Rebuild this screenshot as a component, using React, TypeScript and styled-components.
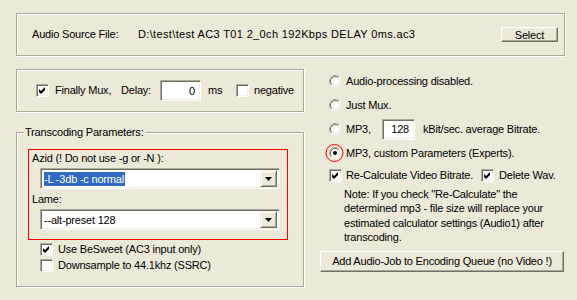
import styled, { createGlobalStyle } from "styled-components";

const GlobalStyle = createGlobalStyle`
  html, body {
    margin: 0;
    padding: 0;
    background: #ece9d8;
  }
  body {
    width: 577px;
    height: 300px;
    overflow: hidden;
    font-family: "Liberation Sans", Arial, sans-serif;
    font-size: 11px;
    letter-spacing: -0.2px;
    color: #000;
  }
`;

const Dialog = styled.div`
  padding: 13px 0 0 16px;
`;

const Etched = styled.div`
  box-sizing: border-box;
  border: 1px solid #aca899;
  box-shadow: inset 1px 1px 0 #fff, 1px 1px 0 #fff;
`;

const SourcePanel = styled(Etched)`
  width: 549px;
  height: 43px;
  display: flex;
  align-items: center;
  padding: 0 6px 0 15px;
`;

const Text = styled.span<{ $w?: number; $ml?: number }>`
  display: inline-block;
  white-space: nowrap;
  line-height: 13px;
  width: ${(p) => (p.$w ? `${p.$w}px` : "auto")};
  margin-left: ${(p) => p.$ml || 0}px;
`;

const PathText = styled(Text)`
  letter-spacing: 0.35px;
`;

const Button = styled.button<{ $w: number; $h: number }>`
  box-sizing: border-box;
  width: ${(p) => p.$w}px;
  height: ${(p) => p.$h}px;
  padding: 0;
  font: inherit;
  letter-spacing: inherit;
  color: #000;
  background: #ece9d8;
  border: 1px solid;
  border-color: #fff #716f64 #716f64 #fff;
  box-shadow: inset -1px -1px 0 #aca899;
`;

const SelectButton = styled(Button)`
  margin-left: auto;
`;

const Lower = styled.div`
  display: flex;
  margin-top: 13px;
`;

const LeftCol = styled.div`
  width: 289px;
  display: flex;
  flex-direction: column;
`;

const MuxPanel = styled(Etched)`
  width: 288px;
  height: 43px;
  display: flex;
  align-items: center;
  padding-left: 19px;
`;

const Sunken = styled.div`
  box-sizing: border-box;
  background: #fff;
  border: 1px solid;
  border-color: #aca899 #fff #fff #aca899;
  box-shadow: inset 1px 1px 0 #716f64, inset -1px -1px 0 #f1efe2;
`;

const NumberBox = styled(Sunken)<{ $w: number }>`
  width: ${(p) => p.$w}px;
  height: 21px;
  display: flex;
  align-items: center;
  justify-content: flex-end;
  padding-right: 5px;
`;

const CheckBox = styled(Sunken)`
  width: 13px;
  height: 13px;
  flex: none;
  display: flex;
  align-items: center;
  justify-content: center;
`;

const Group = styled.fieldset`
  box-sizing: border-box;
  width: 288px;
  min-width: 0;
  margin: 14px 0 0 0;
  padding: 0 0 13px 0;
  border: 1px solid #aca899;
  box-shadow: inset 1px 1px 0 #fff, 1px 1px 0 #fff;
`;

const Legend = styled.legend`
  margin-left: 7px;
  padding: 0 1px;
  line-height: 13px;
  background: #ece9d8;
`;

const RedBox = styled.div`
  box-sizing: border-box;
  width: 260px;
  margin: 10px 0 0 11px;
  padding: 2px 0 9px 3px;
  border: 1px solid #ff0000;
`;

const FieldLabel = styled.div<{ $mt?: number }>`
  line-height: 13px;
  margin-top: ${(p) => p.$mt || 0}px;
`;

const Combo = styled(Sunken)`
  width: 240px;
  height: 21px;
  margin: 3px 0 0 8px;
  display: flex;
  align-items: center;
  padding: 2px 2px 2px 3px;
`;

const ComboValue = styled.span<{ $selected?: boolean }>`
  flex: 1;
  line-height: 14px;
  white-space: nowrap;
  span {
    display: inline-block;
    padding-right: 1px;
    background: ${(p) => (p.$selected ? "#316ac5" : "transparent")};
    color: ${(p) => (p.$selected ? "#fff" : "#000")};
  }
`;

const DropButton = styled.div`
  box-sizing: border-box;
  width: 17px;
  height: 17px;
  display: flex;
  align-items: center;
  justify-content: center;
  background: #ece9d8;
  border: 1px solid;
  border-color: #f1efe2 #716f64 #716f64 #f1efe2;
  box-shadow: inset 1px 1px 0 #fff, inset -1px -1px 0 #aca899;
`;

const CheckRow = styled.div<{ $mt?: number }>`
  height: 16px;
  display: flex;
  align-items: center;
  margin: ${(p) => p.$mt || 0}px 0 0 23px;
`;

const RightCol = styled.div`
  flex: 1;
  padding-left: 15px;
`;

const OptionRow = styled.div<{ $h?: number }>`
  height: ${(p) => p.$h || 24}px;
  display: flex;
  align-items: center;
  padding-left: 9px;
`;

const Note = styled.div`
  margin: 1px 0 0 24px;
  line-height: 14.4px;
  white-space: nowrap;
`;

const AddButton = styled(Button)`
  display: block;
  margin-top: 6px;
`;

const Check = () => (
  <svg width="9" height="9" viewBox="0 0 9 9">
    <path d="M1 3 L3 5 L7 1 L7 4 L3 8 L1 6 Z" fill="#000" />
  </svg>
);

const CheckField = ({ on }: { on?: boolean }) => (
  <CheckBox>{on && <Check />}</CheckBox>
);

const Radio = ({ on, ring }: { on?: boolean; ring?: boolean }) => (
  <svg width="12" height="12" viewBox="0 0 12 12" style={{ overflow: "visible", flex: "none" }}>
    <circle cx="6" cy="6" r="4.5" fill="#fff" />
    <path d="M2.11 9.89 A5.5 5.5 0 0 1 9.89 2.11" fill="none" stroke="#aca899" />
    <path d="M9.89 2.11 A5.5 5.5 0 0 1 2.11 9.89" fill="none" stroke="#fff" />
    <path d="M2.82 9.18 A4.5 4.5 0 0 1 9.18 2.82" fill="none" stroke="#716f64" />
    <path d="M9.18 2.82 A4.5 4.5 0 0 1 2.82 9.18" fill="none" stroke="#f1efe2" />
    {on && <circle cx="6" cy="6" r="2" fill="#000" />}
    {ring && <circle cx="5.5" cy="6" r="8.5" fill="none" stroke="#ff0000" />}
  </svg>
);

const Arrow = () => (
  <svg width="7" height="4" viewBox="0 0 7 4">
    <path d="M0 0 H7 L3.5 4 Z" fill="#000" />
  </svg>
);

export default function App() {
  return (
    <>
      <GlobalStyle />
      <Dialog>
        <SourcePanel>
          <Text $w={106}>Audio Source File:</Text>
          <PathText>D:\test\test AC3 T01 2_0ch 192Kbps DELAY 0ms.ac3</PathText>
          <SelectButton $w={57} $h={15}>Select</SelectButton>
        </SourcePanel>

        <Lower>
          <LeftCol>
            <MuxPanel>
              <CheckField on />
              <Text $w={66} $ml={6}>Finally Mux,</Text>
              <Text $w={39}>Delay:</Text>
              <NumberBox $w={41}>0</NumberBox>
              <Text $w={28} $ml={7}>ms</Text>
              <CheckField />
              <Text $ml={5}>negative</Text>
            </MuxPanel>

            <Group>
              <Legend>Transcoding Parameters:</Legend>
              <RedBox>
                <FieldLabel>Azid (! Do not use -g or -N ):</FieldLabel>
                <Combo>
                  <ComboValue $selected>
                    <span>-L -3db -c normal</span>
                  </ComboValue>
                  <DropButton>
                    <Arrow />
                  </DropButton>
                </Combo>
                <FieldLabel $mt={4}>Lame:</FieldLabel>
                <Combo>
                  <ComboValue>
                    <span>--alt-preset 128</span>
                  </ComboValue>
                  <DropButton>
                    <Arrow />
                  </DropButton>
                </Combo>
              </RedBox>
              <CheckRow $mt={1}>
                <CheckField on />
                <Text $ml={5}>Use BeSweet (AC3 input only)</Text>
              </CheckRow>
              <CheckRow>
                <CheckField />
                <Text $ml={5}>Downsample to 44.1khz (SSRC)</Text>
              </CheckRow>
            </Group>
          </LeftCol>

          <RightCol>
            <OptionRow>
              <Radio />
              <Text $ml={5}>Audio-processing disabled.</Text>
            </OptionRow>
            <OptionRow>
              <Radio />
              <Text $ml={5}>Just Mux.</Text>
            </OptionRow>
            <OptionRow>
              <Radio />
              <Text $w={36} $ml={5}>MP3,</Text>
              <NumberBox $w={33}>128</NumberBox>
              <Text $ml={8}>kBit/sec. average Bitrate.</Text>
            </OptionRow>
            <OptionRow>
              <Radio on ring />
              <Text $ml={5}>MP3, custom Parameters (Experts).</Text>
            </OptionRow>
            <OptionRow $h={21}>
              <CheckField on />
              <Text $w={135} $ml={4}>Re-Calculate Video Bitrate.</Text>
              <CheckField on />
              <Text $ml={5}>Delete Wav.</Text>
            </OptionRow>
            <Note>
              Note: If you check &quot;Re-Calculate&quot; the
              <br />
              determined mp3 - file size will replace your
              <br />
              estimated calculator settings (Audio1) after
              <br />
              transcoding.
            </Note>
            <AddButton $w={244} $h={21}>
              Add Audio-Job to Encoding Queue (no Video !)
            </AddButton>
          </RightCol>
        </Lower>
      </Dialog>
    </>
  );
}
